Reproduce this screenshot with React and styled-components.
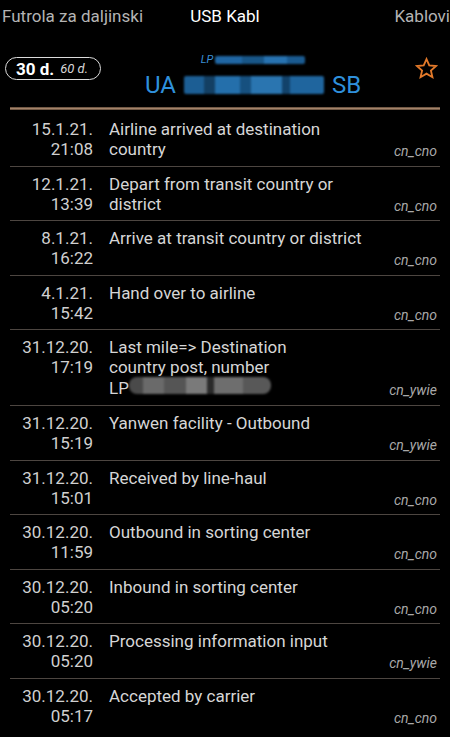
import React from "react";
import styled, { createGlobalStyle } from "styled-components";

const GlobalStyle = createGlobalStyle`
  html, body {
    margin: 0;
    padding: 0;
    background: #000;
  }
  body {
    font-family: Roboto, "Noto Sans", "Liberation Sans", sans-serif;
    color: #d4d4d4;
    overflow: hidden;
  }
`;

const events = [
  { date: "15.1.21.", time: "21:08", text: "Airline arrived at destination country", src: "cn_cno" },
  { date: "12.1.21.", time: "13:39", text: "Depart from transit country or district", src: "cn_cno" },
  { date: "8.1.21.", time: "16:22", text: "Arrive at transit country or district", src: "cn_cno" },
  { date: "4.1.21.", time: "15:42", text: "Hand over to airline", src: "cn_cno" },
  { date: "31.12.20.", time: "17:19", text: "Last mile=> Destination\ncountry post, number\nLP", hidden: true, src: "cn_ywie" },
  { date: "31.12.20.", time: "15:19", text: "Yanwen facility - Outbound", src: "cn_ywie" },
  { date: "31.12.20.", time: "15:01", text: "Received by line-haul", src: "cn_cno" },
  { date: "30.12.20.", time: "11:59", text: "Outbound in sorting center", src: "cn_cno" },
  { date: "30.12.20.", time: "05:20", text: "Inbound in sorting center", src: "cn_cno" },
  { date: "30.12.20.", time: "05:20", text: "Processing information input", src: "cn_ywie" },
  { date: "30.12.20.", time: "05:17", text: "Accepted by carrier", src: "cn_cno" },
];

const Page = styled.div`
  width: 450px;
  height: 737px;
  overflow: hidden;
  background: #000;
`;

const Tabs = styled.div`
  display: grid;
  grid-template-columns: 1fr auto 1fr;
  height: 32px;
  line-height: 32px;
  font-size: 17px;
  white-space: nowrap;
`;

const Tab = styled.div`
  color: ${(p) => (p.$active ? "#ffffff" : "#b4b4b4")};
  text-align: ${(p) => p.$align || "center"};
  padding: ${(p) => p.$pad || "0"};
`;

const Header = styled.div`
  display: flex;
  align-items: flex-start;
  height: 75px;
  padding: 0 12px 0 5px;
`;

const Pill = styled.div`
  margin-top: 25px;
  height: 23px;
  box-sizing: border-box;
  border: 1.5px solid #dcdcdc;
  border-radius: 12px;
  padding: 0 12px 0 10px;
  display: flex;
  align-items: center;
  gap: 6px;
  white-space: nowrap;
`;

const Days = styled.span`
  font-weight: 700;
  font-size: 17px;
  color: #fff;
`;

const MaxDays = styled.span`
  font-style: italic;
  font-size: 13px;
  color: #d8d8d8;
`;

const Code = styled.div`
  flex: 1;
  display: flex;
  flex-direction: column;
  align-items: center;
  margin-top: 21px;
  padding-right: 10px;
`;

const SmallCode = styled.div`
  display: flex;
  align-items: center;
  font-size: 11px;
  line-height: 13px;
  font-style: italic;
  color: #3a8fd6;
`;

const BigCode = styled.div`
  display: flex;
  align-items: center;
  gap: 8px;
  margin-top: 5px;
  font-size: 24px;
  line-height: 28px;
  color: #2f90db;
`;

const Blur = styled.span`
  display: inline-block;
  width: ${(p) => p.$w}px;
  height: ${(p) => p.$h}px;
  margin-left: ${(p) => p.$ml || 0}px;
  border-radius: ${(p) => p.$r || 2}px;
  background: ${(p) => p.$bg};
  filter: blur(1.2px);
`;

const Star = styled.svg`
  margin-top: 25px;
  width: 23px;
  height: 23px;
`;

const Divider = styled.div`
  height: 3px;
  margin: 0 10px 2px;
  background: linear-gradient(#5a4433, #a3836a 50%, #5a4433);
`;

const List = styled.div`
  margin: 0 10px;
`;

const Row = styled.div`
  display: grid;
  grid-template-columns: 83px 1fr auto;
  column-gap: 16px;
  padding: 7px 3px 6.6px 0;
  line-height: 20px;
  font-size: 17px;
  & + & {
    border-top: 1px solid #4d4641;
  }
`;

const When = styled.div`
  text-align: right;
  color: #d0d0d0;
  white-space: pre-line;
`;

const What = styled.div`
  max-width: 268px;
  color: #d6d6d6;
  white-space: pre-line;
`;

const Source = styled.div`
  align-self: end;
  font-size: 14px;
  line-height: 16px;
  font-style: italic;
  color: #a9a9a9;
`;

const blueBlock =
  "linear-gradient(90deg, #1c5e94 0 14%, #133f63 14% 22%, #246fab 22% 40%, #16507f 40% 48%, #2a75b0 48% 70%, #12426a 70% 76%, #1f659e 76% 100%)";
const smallBlue =
  "linear-gradient(90deg, #2066a3 0 30%, #185688 30% 55%, #2772b0 55% 80%, #1a5a90 80% 100%)";
const grayBlock =
  "linear-gradient(90deg, #4a4a4a 0 10%, #6a6a6a 10% 25%, #555 25% 40%, #7a7a7a 40% 55%, #2a2a2a 55% 60%, #6e6e6e 60% 80%, #585858 80% 100%)";

const StarIcon = () => (
  <Star viewBox="0 0 24 24">
    <path
      d="M12 2.2l2.9 6.6 7.1.6-5.4 4.7 1.6 7-6.2-3.7-6.2 3.7 1.6-7L2 9.4l7.1-.6z"
      fill="none"
      stroke="#e2792a"
      strokeWidth="1.9"
      strokeLinejoin="miter"
    />
  </Star>
);

const App = () => (
  <Page>
    <GlobalStyle />
    <Tabs>
      <Tab $align="left" $pad="0 0 0 2px">Futrola za daljinski</Tab>
      <Tab $active>USB Kabl</Tab>
      <Tab $align="right">Kablovi</Tab>
    </Tabs>
    <Header>
      <Pill>
        <Days>30 d.</Days>
        <MaxDays>60 d.</MaxDays>
      </Pill>
      <Code>
        <SmallCode>
          LP
          <Blur $w={90} $h={8} $ml={2} $bg={smallBlue} />
        </SmallCode>
        <BigCode>
          UA
          <Blur $w={140} $h={18} $bg={blueBlock} />
          SB
        </BigCode>
      </Code>
      <StarIcon />
    </Header>
    <Divider />
    <List>
      {events.map((e, i) => (
        <Row key={i}>
          <When>{`${e.date}\n${e.time}`}</When>
          <What>
            {e.text}
            {e.hidden && <Blur $w={142} $h={17} $r={8} $bg={grayBlock} />}
          </What>
          <Source>{e.src}</Source>
        </Row>
      ))}
    </List>
  </Page>
);

export default App;
